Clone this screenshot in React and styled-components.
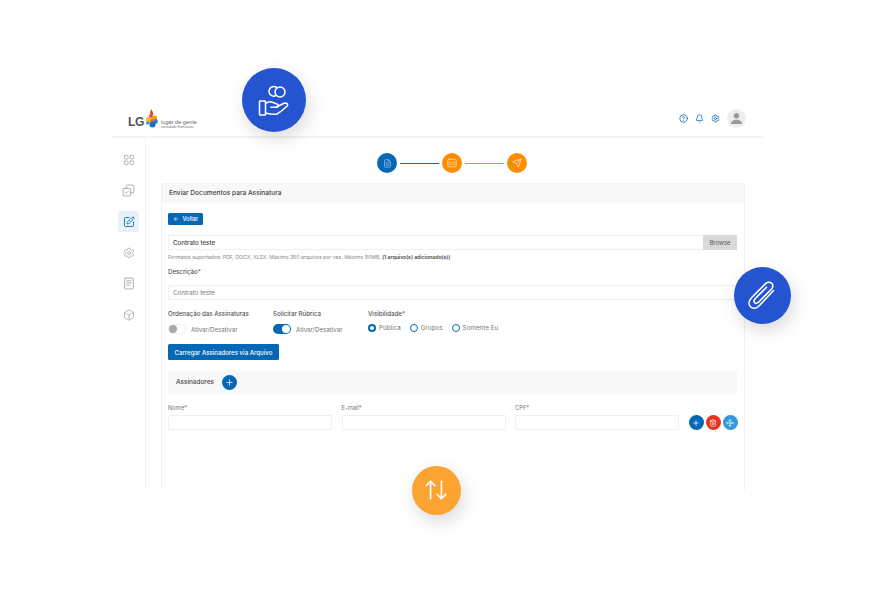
import React from 'react';
import styled, { createGlobalStyle } from 'styled-components';
import {
  LayoutGrid, SquarePen, Settings, FileText, Box, CircleHelp, Bell,
  Send, ArrowLeft, Plus, Trash2, Move, ArrowUpDown,
} from 'lucide-react';

const Global = createGlobalStyle`
  html, body { margin: 0; padding: 0; background: #fff; }
  body { font-family: Inter, "Liberation Sans", sans-serif; color: #3a3a3a; }
  *, *::before, *::after { box-sizing: border-box; }
`;

const Stage = styled.div`
  position: relative;
  width: 874px;
  height: 590px;
  padding: 100px 111px 100px 112px;
  overflow: hidden;
  background: #fff;
`;
const Frame = styled.div`
  display: flex;
  flex-direction: column;
  height: 390px;
`;
const Header = styled.header`
  height: 38px;
  flex: none;
  display: flex;
  align-items: center;
  justify-content: space-between;
  padding: 1px 17px 0 16px;
  border-bottom: 2px solid #f4f4f4;
`;
const Logo = styled.div`
  display: flex;
  align-items: flex-end;
`;
const LogoLG = styled.span`
  font: 700 12px/13px "Liberation Sans", sans-serif;
  color: #555;
  letter-spacing: -0.3px;
  margin-right: 1px;
`;
const LogoTexts = styled.div`
  display: flex;
  flex-direction: column;
  margin-left: 2px;
`;
const LogoName = styled.span`
  font: 400 5.6px/6px "Liberation Sans", sans-serif;
  color: #666;
`;
const LogoSub = styled.span`
  font: 400 3.4px/4px "Liberation Sans", sans-serif;
  color: #777;
`;
const HeaderTools = styled.div`
  display: flex;
  align-items: center;
  gap: 7px;
  color: #0568b5;
`;
const Avatar = styled.div`
  width: 19px;
  height: 19px;
  border-radius: 50%;
  background: #eeeeee;
  display: flex;
  align-items: center;
  justify-content: center;
`;
const Body = styled.div`
  flex: 1;
  display: flex;
  min-height: 0;
`;
const Sidebar = styled.nav`
  width: 34px;
  flex: none;
  border-right: 1.5px solid #f1f1f1;
  padding: 11px 0 0 6px;
  display: flex;
  flex-direction: column;
  align-items: flex-start;
  gap: 10px;
`;
const NavItem = styled.div`
  width: 21px;
  height: 21px;
  border-radius: 3px;
  display: flex;
  align-items: center;
  justify-content: center;
  color: ${p => (p.$active ? '#0568b5' : '#97a1a5')};
  background: ${p => (p.$active ? '#e6f2f7' : 'transparent')};
`;
const Main = styled.main`
  flex: 1;
  min-width: 0;
  padding: 15px 18px 0 15px;
  display: flex;
  flex-direction: column;
`;
const Stepper = styled.div`
  display: flex;
  align-items: center;
  justify-content: center;
  gap: 3px;
  height: 20px;
  margin: 0 0 10px 0;
  padding-right: 2px;
`;
const StepDot = styled.div`
  width: 20px;
  height: 20px;
  border-radius: 50%;
  flex: none;
  background: ${p => p.$color};
  color: ${p => p.$fg || '#fff'};
  display: flex;
  align-items: center;
  justify-content: center;
`;
const StepLine = styled.div`
  width: 39px;
  height: 1px;
  background: ${p => p.$color};
`;
const Card = styled.section`
  flex: 1;
  min-height: 0;
  border: 1px solid #f1f1f1;
  border-bottom: none;
  border-radius: 2px 2px 0 0;
  display: flex;
  flex-direction: column;
`;
const CardTitle = styled.h2`
  margin: 0;
  height: 19px;
  flex: none;
  padding-left: 7px;
  background: #f8f8f8;
  font-size: 6.6px;
  font-weight: 500;
  line-height: 19px;
  color: #444;
`;
const CardBody = styled.div`
  padding: 10px 7px 0 6px;
  display: flex;
  flex-direction: column;
  align-items: stretch;
`;
const PrimaryButton = styled.button`
  align-self: flex-start;
  height: ${p => p.$h}px;
  padding: 0 ${p => p.$px}px;
  border: none;
  border-radius: 1.5px;
  background: #0568b5;
  color: #fff;
  font: 500 ${p => p.$fs}px Inter, sans-serif;
  display: flex;
  align-items: center;
  gap: 4px;
`;
const FileRow = styled.div`
  margin-top: 10px;
  height: 15px;
  display: flex;
  border: 1px solid #efefef;
  border-right: none;
`;
const FileName = styled.div`
  flex: 1;
  padding-left: 4px;
  font-size: 6.2px;
  font-weight: 500;
  line-height: 13px;
  color: #444;
`;
const Browse = styled.div`
  width: 34px;
  margin: -1px 0;
  background: #d9d9d9;
  font-size: 6px;
  line-height: 15px;
  text-align: center;
  color: #555;
`;
const Hint = styled.p`
  margin: 3px 0 0;
  font-size: 5.15px;
  line-height: 8px;
  color: #888;
  b { font-weight: 600; color: #444; }
`;
const Label = styled.label`
  display: block;
  margin-top: ${p => p.$mt || 0}px;
  font-size: ${p => p.$fs || 6.15}px;
  font-weight: ${p => p.$w || 500};
  line-height: 8px;
  color: ${p => p.$c || '#555'};
`;
const TextBox = styled.div`
  height: 15px;
  margin-top: ${p => p.$mt || 0}px;
  border: 1px solid #efefef;
  border-radius: 1px;
  padding-left: 4px;
  font-size: 6.2px;
  line-height: 13px;
  color: #777;
`;
const OptionsRow = styled.div`
  margin-top: 9px;
  display: grid;
  grid-template-columns: 105px 95px 1fr;
`;
const OptionBlock = styled.div`
  display: flex;
  flex-direction: column;
  gap: 6px;
`;
const ToggleRow = styled.div`
  display: flex;
  align-items: center;
  gap: 5px;
  font-size: 6.2px;
  color: #777;
  height: 10px;
`;
const Toggle = styled.div`
  position: relative;
  width: 18px;
  height: 10px;
  border-radius: 5px;
  background: ${p => (p.$on ? '#0568b5' : '#fff')};
  border: ${p => (p.$on ? 'none' : '1px solid #f0f0f0')};
  &::after {
    content: '';
    position: absolute;
    top: ${p => (p.$on ? 1 : 0)}px;
    left: ${p => (p.$on ? 9 : 0)}px;
    width: 8px;
    height: 8px;
    border-radius: 50%;
    background: ${p => (p.$on ? '#fff' : '#a8a8a8')};
  }
`;
const Radios = styled.div`
  display: flex;
  gap: 9px;
  margin-top: -1px;
  height: 10px;
  align-items: center;
`;
const Radio = styled.div`
  display: flex;
  align-items: center;
  gap: 3px;
  font-size: 6.3px;
  color: #777;
  &::before {
    content: '';
    flex: none;
    width: 8px;
    height: 8px;
    border-radius: 50%;
    background: #fff;
    border: ${p => (p.$on ? '2.5px solid #0568b5' : '1px solid #0568b5')};
  }
`;
const SignersBar = styled.div`
  margin-top: 10px;
  height: 24px;
  background: #f8f8f8;
  display: flex;
  align-items: center;
  gap: 8px;
  padding-left: 8px;
  font-size: 6.4px;
  font-weight: 500;
  color: #444;
`;
const RoundBtn = styled.div`
  width: 15px;
  height: 15px;
  flex: none;
  border-radius: 50%;
  background: ${p => p.$bg};
  color: #fff;
  display: flex;
  align-items: center;
  justify-content: center;
`;
const SignerRow = styled.div`
  margin-top: 10px;
  display: grid;
  grid-template-columns: 164px 164px 164px 1fr;
  column-gap: 9.5px;
  align-items: end;
`;
const Field = styled.div`
  display: flex;
  flex-direction: column;
  gap: 3px;
`;
const RowActions = styled.div`
  display: flex;
  justify-content: flex-end;
  gap: 2px;
  padding-right: 0.5px;
`;
const Bubble = styled.div`
  position: absolute;
  left: ${p => p.$x - p.$r}px;
  top: ${p => p.$y - p.$r}px;
  width: ${p => p.$r * 2}px;
  height: ${p => p.$r * 2}px;
  border-radius: 50%;
  background: ${p => p.$bg};
  color: #fff;
  box-shadow: 3px 7px 18px rgba(0, 0, 0, 0.14);
  display: flex;
  align-items: center;
  justify-content: center;
`;

const LogoMark = () => (
  <svg width="14" height="20" viewBox="0 0 14 20">
    <path d="M6 0l1.500 2.500 1 3-3 .6-.3-3z" fill="#d8402a" />
    <circle cx="6" cy="7" r="2" fill="#e2542a" />
    <circle cx="9.500" cy="9" r="2.600" fill="#f3a21c" />
    <circle cx="4" cy="11" r="3" fill="#f6b916" />
    <circle cx="10.500" cy="12.500" r="2.400" fill="#2f7fc4" />
    <circle cx="7.500" cy="15.500" r="3" fill="#1c6fb8" />
    <circle cx="2.800" cy="14" r="1.800" fill="#3a9bd8" />
    <circle cx="7" cy="11.500" r="1.600" fill="#e3602a" />
  </svg>
);

const HandIcon = () => (
  <svg width="32" height="32" viewBox="0 0 32 32" fill="none" stroke="#fff" strokeWidth="1.5" strokeLinecap="round" strokeLinejoin="round">
    <path d="M18.500 3.400a4.800 4.800 0 1 0-.9 8.400" />
    <circle cx="22" cy="8" r="5" />
    <rect x="1.500" y="17" width="6" height="14" rx="0.6" />
    <path d="M7.500 19.500c3-2 5.500-2 7.500-1l4 1.500c2 .8 1.500 3.500-1 3.300h-5" />
    <path d="M18.500 23l7-3.500c3-1.200 5.200.8 3.600 2.500-2.600 2.600-6.100 5.800-10.100 8-3 1-7 0-11.500-1" />
  </svg>
);

const ClipIcon = () => (
  <svg width="30" height="30" viewBox="0 0 30 30" fill="none" stroke="#fff" strokeWidth="1.6" strokeLinecap="round" strokeLinejoin="round">
    <path d="M26.500 9.500 12.500 24.500c-3 3.200-6.800 3.500-9 1.300-2.300-2.300-1.800-6 1-9L18.300 2.900c2-2 4.700-2.200 6.300-.6 1.700 1.700 1.400 4.200-.5 6.200L11.500 21.300c-1.200 1.200-2.800 1.400-3.800.4-1-1-.8-2.600.4-3.900L19.500 6.200" />
  </svg>
);

const CopyMark = () => (
  <svg width="13" height="13" viewBox="0 0 24 24" fill="none" stroke="currentColor" strokeWidth="1.500" strokeLinecap="round" strokeLinejoin="round">
    <rect x="2" y="8" width="14" height="14" rx="2" />
    <path d="M8 8V4a2 2 0 0 1 2-2h10a2 2 0 0 1 2 2v10a2 2 0 0 1-2 2h-4" />
    <path d="m6 15 2 2 4-4" />
  </svg>
);

const SheetMark = () => (
  <svg width="12" height="13" viewBox="0 0 22 24" fill="none" stroke="currentColor" strokeWidth="1.500" strokeLinecap="round" strokeLinejoin="round">
    <rect x="3" y="2" width="16" height="20" rx="1.500" />
    <path d="M7 7h8M7 11h8M7 15h5" />
  </svg>
);

const PanelMark = () => (
  <svg width="10" height="10" viewBox="0 0 24 24" fill="none" stroke="currentColor" strokeWidth="2" strokeLinecap="round" strokeLinejoin="round">
    <rect x="2" y="3" width="20" height="18" rx="2" />
    <path d="M6 10h4M14 10h4M6 15h4M14 15h4" />
  </svg>
);

const Person = () => (
  <svg width="13" height="13" viewBox="0 0 13 13" fill="#9b9b9b">
    <circle cx="6.500" cy="3.700" r="2.700" />
    <path d="M1 12c0-2.800 2.500-4.200 5.500-4.200S12 9.200 12 12z" />
  </svg>
);

export default function App() {
  return (
    <Stage>
      <Global />
      <Frame>
        <Header>
          <Logo>
            <LogoLG>LG</LogoLG>
            <LogoMark />
            <LogoTexts>
              <LogoName>lugar de gente</LogoName>
              <LogoSub>sociedade Humanizar</LogoSub>
            </LogoTexts>
          </Logo>
          <HeaderTools>
            <CircleHelp size={9} strokeWidth={2} />
            <Bell size={9} strokeWidth={2} />
            <Settings size={9} strokeWidth={2} />
            <Avatar><Person /></Avatar>
          </HeaderTools>
        </Header>
        <Body>
          <Sidebar>
            <NavItem><LayoutGrid size={12} strokeWidth={1.4} /></NavItem>
            <NavItem><CopyMark /></NavItem>
            <NavItem $active><SquarePen size={12} strokeWidth={1.8} /></NavItem>
            <NavItem><Settings size={12} strokeWidth={1.4} /></NavItem>
            <NavItem><SheetMark /></NavItem>
            <NavItem><Box size={12} strokeWidth={1.4} /></NavItem>
          </Sidebar>
          <Main>
            <Stepper>
              <StepDot $color="#0568b5" $fg="#a9d3ef"><FileText size={9} strokeWidth={1.6} /></StepDot>
              <StepLine $color="#0568b5" />
              <StepDot $color="#ff8c00" $fg="#ffe0b5"><PanelMark /></StepDot>
              <StepLine $color="#ff8c00" />
              <StepDot $color="#ff8c00"><Send size={10} strokeWidth={1.5} /></StepDot>
            </Stepper>
            <Card>
              <CardTitle>Enviar Documentos para Assinatura</CardTitle>
              <CardBody>
                <PrimaryButton $h={12} $px={4.500} $fs={5.500}>
                  <ArrowLeft size={6} strokeWidth={2.4} />
                  Voltar
                </PrimaryButton>
                <FileRow>
                  <FileName>Contrato teste</FileName>
                  <Browse>Browse</Browse>
                </FileRow>
                <Hint>
                  Formatos suportados: PDF, DOCX, XLSX. Máximo 350 arquivos por vez. Máximo 90MB. <b>(1 arquivo(s) adicionado(s))</b>
                </Hint>
                <Label $mt={7}>Descrição*</Label>
                <TextBox $mt={9}>Contrato teste</TextBox>
                <OptionsRow>
                  <OptionBlock>
                    <Label $mt={1}>Ordenação das Assinaturas</Label>
                    <ToggleRow><Toggle />Ativar/Desativar</ToggleRow>
                  </OptionBlock>
                  <OptionBlock>
                    <Label $mt={1}>Solicitar Rúbrica</Label>
                    <ToggleRow><Toggle $on />Ativar/Desativar</ToggleRow>
                  </OptionBlock>
                  <OptionBlock>
                    <Label $mt={1}>Visibilidade*</Label>
                    <Radios>
                      <Radio $on>Pública</Radio>
                      <Radio>Grupos</Radio>
                      <Radio>Somente Eu</Radio>
                    </Radios>
                  </OptionBlock>
                </OptionsRow>
                <PrimaryButton $h={16} $px={6.500} $fs={6.100} style={{ marginTop: 10 }}>
                  Carregar Assinadores via Arquivo
                </PrimaryButton>
                <SignersBar>
                  Assinadores
                  <RoundBtn $bg="#0568b5"><Plus size={9} strokeWidth={2} /></RoundBtn>
                </SignersBar>
                <SignerRow>
                  <Field>
                    <Label $fs={5.800} $w={400} $c="#777">Nome*</Label>
                    <TextBox />
                  </Field>
                  <Field>
                    <Label $fs={5.800} $w={400} $c="#777">E-mail*</Label>
                    <TextBox />
                  </Field>
                  <Field>
                    <Label $fs={5.800} $w={400} $c="#777">CPF*</Label>
                    <TextBox />
                  </Field>
                  <RowActions>
                    <RoundBtn $bg="#0568b5"><Plus size={8} strokeWidth={2.2} /></RoundBtn>
                    <RoundBtn $bg="#e6321e"><Trash2 size={8} strokeWidth={2} /></RoundBtn>
                    <RoundBtn $bg="#3498db"><Move size={8} strokeWidth={2} /></RoundBtn>
                  </RowActions>
                </SignerRow>
              </CardBody>
            </Card>
          </Main>
        </Body>
      </Frame>
      <Bubble $x={274} $y={100} $r={32} $bg="#2454d0"><HandIcon /></Bubble>
      <Bubble $x={762} $y={295.500} $r={28.500} $bg="#2454d0"><ClipIcon /></Bubble>
      <Bubble $x={436} $y={490} $r={24.500} $bg="#fca432"><ArrowUpDown size={26} strokeWidth={1.5} /></Bubble>
    </Stage>
  );
}
